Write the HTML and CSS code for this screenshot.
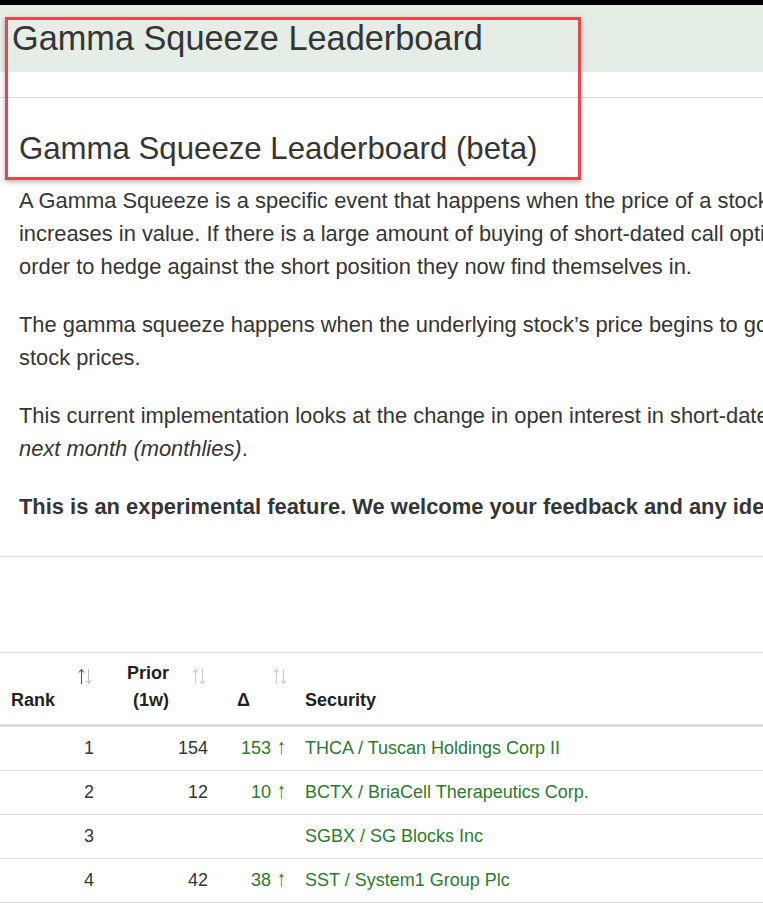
FILE: index.html
```html
<!DOCTYPE html>
<html lang="en">
<head>
<meta charset="utf-8">
<title>Gamma Squeeze Leaderboard</title>
<link rel="stylesheet" href="styles.css">
</head>
<body>
<div class="topbar"></div>
<header class="band">
  <h1 class="band-title">Gamma Squeeze Leaderboard</h1>
</header>
<div class="spacer"></div>
<main class="page">
  <section class="intro">
    <h2 class="title">Gamma Squeeze Leaderboard (beta)</h2>
    <p class="para">A Gamma Squeeze is a specific event that happens when the price of a stock rises quickly and the value of its call options<br>increases in value. If there is a large amount of buying of short-dated call options, market makers must buy the underlying stock in<br>order to hedge against the short position they now find themselves in.</p>
    <p class="para">The gamma squeeze happens when the underlying stock’s price begins to go up, forcing even more buying and further increasing<br>stock prices.</p>
    <p class="para">This current implementation looks at the change in open interest in short-dated call options expiring <em>this week (weeklies)</em> or<br><em>next month (monthlies)</em>.</p>
    <p class="para"><strong>This is an experimental feature. We welcome your feedback and any ideas for improvement.</strong></p>
  </section>
  <div class="gap"></div>
  <table class="board">
    <thead>
      <tr>
        <th class="num col-rank">Rank<span class="sort"><svg width="14" height="17" viewBox="0 0 14 17"><path d="M3.5 16V1.5M0.8 4.5l2.7-3 2.7 3" fill="none" stroke="#555" stroke-width="1.1"/><path d="M10.5 1v14.5M7.8 12.5l2.7 3 2.7-3" fill="none" stroke="#bbb" stroke-width="1.1"/></svg></span></th>
        <th class="num col-prior">Prior<br>(1w)<span class="sort"><svg width="14" height="17" viewBox="0 0 14 17"><path d="M3.5 16V1.5M0.8 4.5l2.7-3 2.7 3" fill="none" stroke="#c8c8c8" stroke-width="1.1"/><path d="M10.5 1v14.5M7.8 12.5l2.7 3 2.7-3" fill="none" stroke="#c8c8c8" stroke-width="1.1"/></svg></span></th>
        <th class="num col-delta">Δ<span class="sort"><svg width="14" height="17" viewBox="0 0 14 17"><path d="M3.5 16V1.5M0.8 4.5l2.7-3 2.7 3" fill="none" stroke="#c8c8c8" stroke-width="1.1"/><path d="M10.5 1v14.5M7.8 12.5l2.7 3 2.7-3" fill="none" stroke="#c8c8c8" stroke-width="1.1"/></svg></span></th>
        <th class="col-sec">Security</th>
      </tr>
    </thead>
    <tbody>
      <tr><td class="num">1</td><td class="num">154</td><td class="num up">153 <span class="arrow">↑</span></td><td class="sec">THCA / Tuscan Holdings Corp II</td></tr>
      <tr><td class="num">2</td><td class="num">12</td><td class="num up">10 <span class="arrow">↑</span></td><td class="sec">BCTX / BriaCell Therapeutics Corp.</td></tr>
      <tr><td class="num">3</td><td class="num"></td><td class="num up"></td><td class="sec">SGBX / SG Blocks Inc</td></tr>
      <tr><td class="num">4</td><td class="num">42</td><td class="num up">38 <span class="arrow">↑</span></td><td class="sec">SST / System1 Group Plc</td></tr>
    </tbody>
  </table>
</main>
<div class="annotation"></div>
</body>
</html>
```

FILE: styles.css
```css
html, body {
  margin: 0;
  padding: 0;
  overflow: hidden;
  background: #fff;
}
body {
  font-family: "Liberation Sans", Arial, sans-serif;
  color: #353535;
  position: relative;
}
.topbar {
  height: 5px;
  background: #000;
}
.band {
  background: #e4ede6;
  height: 67px;
  padding: 14px 0 0 12px;
  box-sizing: border-box;
}
.band-title {
  margin: 0;
  font-size: 34.3px;
  font-weight: normal;
  line-height: 39px;
  color: #353535;
  white-space: nowrap;
}
.spacer {
  height: 25px;
  border-bottom: 1px solid #ddd;
}
.intro {
  padding: 33px 0 33px 19px;
  border-bottom: 1px solid #ddd;
}
.title {
  margin: 0 0 17px;
  font-size: 31.2px;
  font-weight: normal;
  line-height: 36px;
  color: #353535;
  white-space: nowrap;
}
.para {
  margin: 0 0 25px;
  font-size: 21.9px;
  line-height: 33px;
  white-space: nowrap;
}
.para:last-child {
  margin-bottom: 0;
}
.para strong {
  font-weight: bold;
}
.gap {
  height: 95px;
}
.board {
  width: 100%;
  border-collapse: collapse;
  border-top: 1px solid #ddd;
  font-size: 18px;
}
.board th {
  position: relative;
  vertical-align: bottom;
  font-weight: bold;
  color: #222;
  line-height: 27px;
  padding: 7px 8px 10px;
  border-bottom: 3px solid #ddd;
}
.board th.num {
  text-align: right;
  padding-right: 47px;
}
.board th.col-sec {
  text-align: left;
}
.col-rank { width: 47px; }
.col-prior { width: 59px; }
.col-delta { width: 26px; }
.sort {
  position: absolute;
  right: 10px;
  top: 15px;
  width: 14px;
  height: 17px;
}
.sort svg {
  display: block;
}
.board td {
  line-height: 27px;
  padding: 8px 8px;
  border-bottom: 1px solid #ddd;
  white-space: nowrap;
}
.board td.num {
  text-align: right;
}
.board td.up {
  color: #2b7a2e;
  padding-right: 10px;
}
.arrow {
  display: inline-block;
  font-size: 22px;
  line-height: 20px;
  transform: scaleX(0.8);
  font-weight: 300;
}
.board td.sec {
  color: #2b7a2e;
}
.annotation {
  position: absolute;
  left: 5px;
  top: 17px;
  width: 576px;
  height: 163px;
  box-sizing: border-box;
  border: 3px solid #e5484d;
  box-shadow: 0 2px 5px rgba(0, 0, 0, 0.3);
  pointer-events: none;
}
```
